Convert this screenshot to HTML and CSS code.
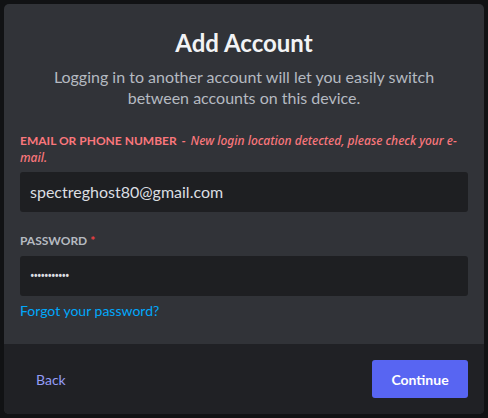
FILE: index.html
```html
<!DOCTYPE html>
<html lang="en">
<head>
    <meta charset="UTF-8">
    <meta name="viewport" content="width=device-width, initial-scale=1.0">
    <title>Add Account</title>
    <link rel="stylesheet" href="styles.css">
</head>
<body>
    <div class="modal">
        <div class="modal-body">
            <h1 class="title">Add Account</h1>
            <p class="subtitle">Logging in to another account will let you easily switch between accounts on this device.</p>

            <!-- Email field -->
            <div class="field">
                <label class="label label-error">EMAIL OR PHONE NUMBER <span class="error-msg"><span class="dash">-</span> New login location detected, please check your e-mail.</span></label>
                <div class="input">spectreghost80@gmail.com</div>
            </div>

            <!-- Password field -->
            <div class="field">
                <label class="label">PASSWORD <span class="required">*</span></label>
                <div class="input input-password">•••••••••••</div>
            </div>

            <a class="link" href="#">Forgot your password?</a>
        </div>

        <div class="modal-footer">
            <button class="btn-back">Back</button>
            <button class="btn-continue">Continue</button>
        </div>
    </div>
</body>
</html>
```

FILE: styles.css
```css
body {
    font-family: Lato, "Noto Sans", sans-serif;
    background-color: #111214;
    margin: 0;
    padding: 4px;
}
.modal {
    background-color: #313338;
    border-radius: 5px;
    overflow: hidden;
    height: 410px;
    display: flex;
    flex-direction: column;
}
.modal-body {
    padding: 16px 16px 0;
    flex: 1;
}
.title {
    color: #f2f3f5;
    font-size: 24px;
    font-weight: 700;
    text-align: center;
    margin: 8px 0 0;
    line-height: 30px;
}
.subtitle {
    color: #b5bac1;
    font-size: 16px;
    text-align: center;
    line-height: 21px;
    margin: 8px 20px 0;
}
.field {
    margin-top: 24px;
}
.field + .field {
    margin-top: 20px;
}
.label {
    display: block;
    color: #b5bac1;
    font-size: 12px;
    font-weight: 700;
    line-height: 17px;
    margin-bottom: 7px;
}
.label-error {
    color: #fa777c;
    margin-bottom: 6px;
}
.error-msg {
    font-family: "Noto Sans", sans-serif;
    font-style: italic;
    font-weight: 500;
}
.dash {
    padding: 0 2px;
}
.required {
    color: #f23f42;
}
.input {
    background-color: #1e1f22;
    color: #dbdee1;
    font-size: 16px;
    height: 40px;
    line-height: 40px;
    padding: 0 10px;
    border-radius: 3px;
}
.input-password {
    font-family: "Noto Sans", sans-serif;
    font-size: 12px;
    letter-spacing: -1px;
}
.link {
    display: inline-block;
    color: #00a8fc;
    font-size: 14px;
    text-decoration: none;
    margin-top: 6px;
}
.modal-footer {
    background-color: #202125;
    padding: 16px;
    display: flex;
    justify-content: space-between;
    align-items: center;
}
.btn-back {
    background: none;
    border: none;
    color: #949cf7;
    font-family: inherit;
    font-size: 14px;
    padding: 2px 16px;
    cursor: pointer;
}
.btn-continue {
    background-color: #5865f2;
    color: white;
    border: none;
    border-radius: 3px;
    font-family: inherit;
    font-size: 14px;
    font-weight: 700;
    width: 96px;
    height: 38px;
    cursor: pointer;
}
```
